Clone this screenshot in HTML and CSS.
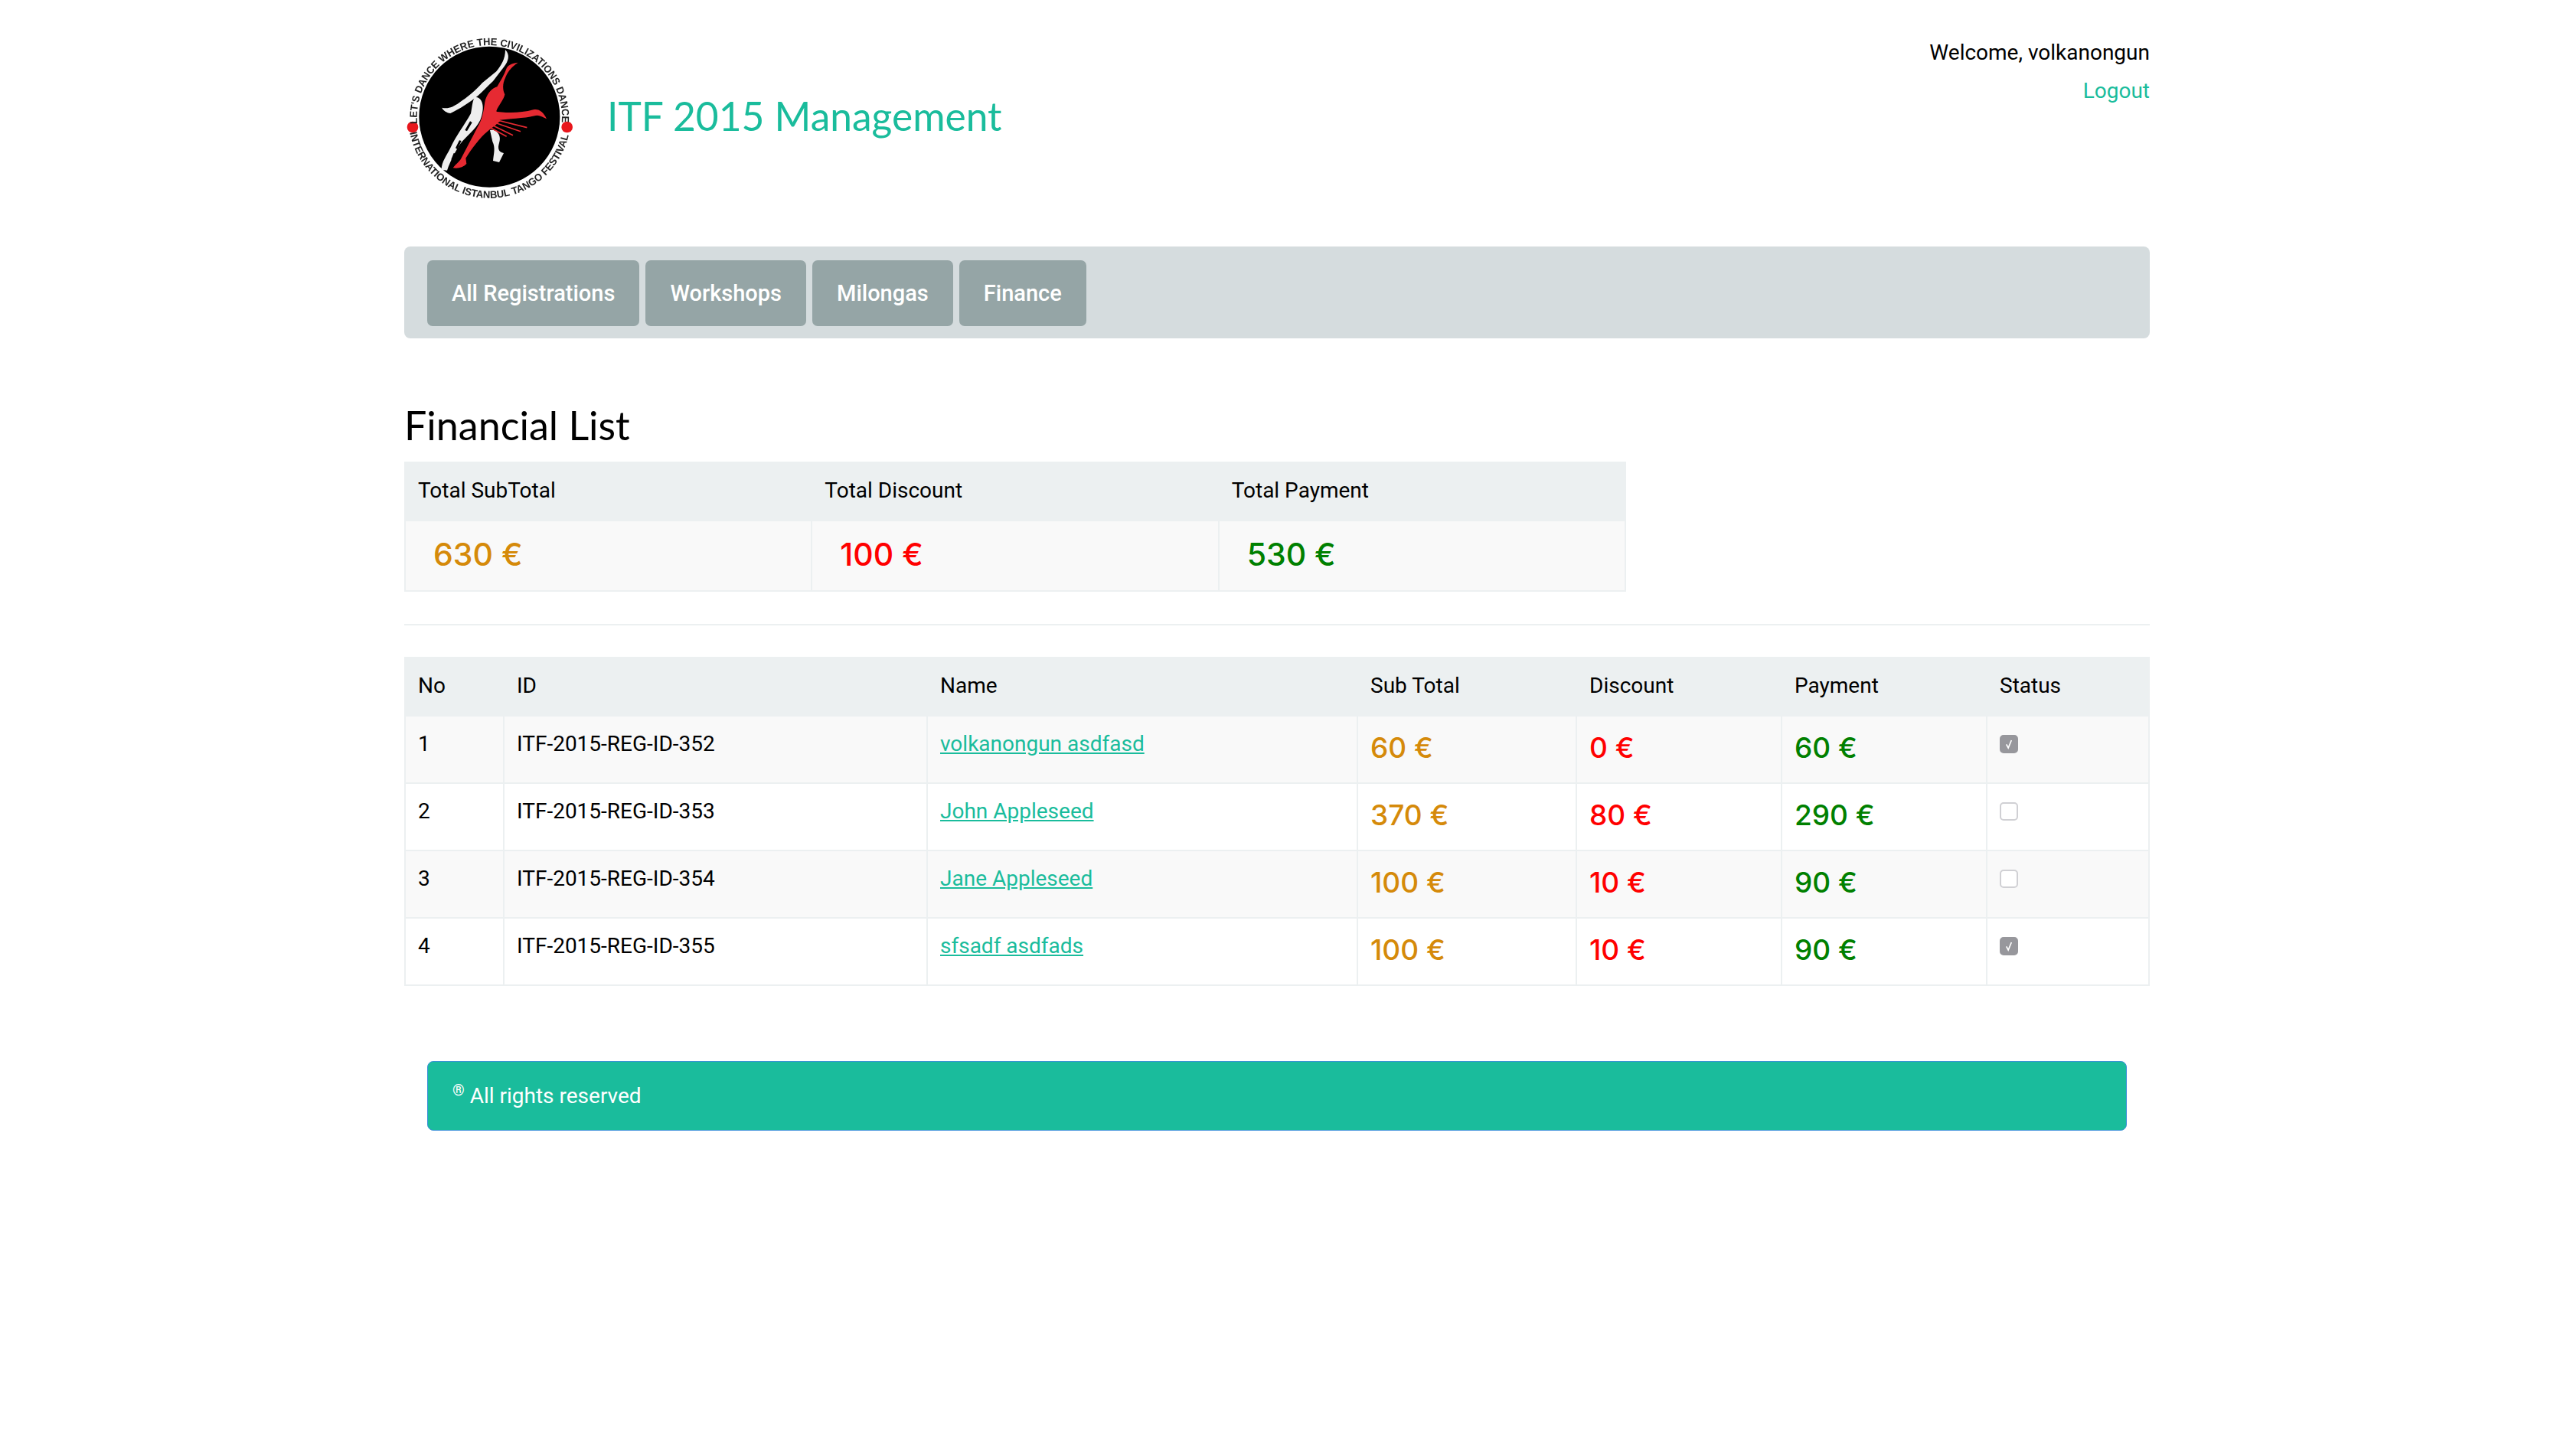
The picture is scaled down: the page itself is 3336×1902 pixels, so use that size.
FILE: index.html
```html
<!DOCTYPE html>
<html lang="en">
<head>
    <meta charset="UTF-8">
    <title>ITF 2015 Management</title>
    <link rel="stylesheet" href="styles.css">
</head>
<body>
    <div class="page">
        <header class="top">
            <svg class="logo" viewBox="30 36 660 660">
                <defs>
                    <filter id="soft"><feGaussianBlur stdDeviation="1.6"/></filter>
                    <path id="ringTop" d="M75 395 A284 284 0 1 1 641 395"/>
                    <path id="ringBottom" d="M46 430 A318 318 0 0 0 670 430"/>
                </defs>
                <g filter="url(#soft)">
                    <circle cx="358" cy="368" r="276" fill="#000"/>
                    <circle cx="57" cy="408" r="22" fill="#e8141c"/>
                    <circle cx="662" cy="408" r="22" fill="#e8141c"/>
                    <text class="ring-text"><textPath href="#ringTop" textLength="935" lengthAdjust="spacingAndGlyphs">LET'S DANCE WHERE THE CIVILIZATIONS DANCE</textPath></text>
                    <text class="ring-text"><textPath href="#ringBottom" textLength="865" lengthAdjust="spacingAndGlyphs">INTERNATIONAL ISTANBUL TANGO FESTIVAL</textPath></text>
                    <path fill="#eee" d="M420 105 C440 125 432 150 415 172 L372 228 C350 248 332 268 312 286 C280 312 240 338 205 354 C190 352 175 342 172 332 C195 338 215 330 240 312 C270 292 300 268 330 235 L385 190 C405 165 420 140 420 105 Z"/>
                    <path fill="#eee" d="M300 290 C332 290 342 330 322 380 C302 420 270 440 245 472 C225 502 205 540 192 578 L170 575 C170 545 190 520 205 490 C225 445 260 400 285 355 C290 330 290 310 300 290 Z"/>
                    <path fill="#eee" d="M360 420 C385 415 407 440 396 470 C390 490 392 505 414 510 L396 546 L372 540 C375 510 382 490 370 465 Z"/>
                    <path fill="#000" d="M240 460 L225 490 L232 495 L248 462 Z M218 510 L208 535 L214 538 L226 512 Z M282 385 L262 420 L270 424 L290 390 Z"/>
                    <path fill="#e62a32" d="M470 155 C445 158 430 165 424 180 C415 205 402 225 388 250 C366 256 346 280 340 310 C335 345 330 380 310 410 C290 450 265 495 245 535 C235 548 225 555 215 568 C235 572 255 566 268 552 L265 530 C290 490 320 450 350 425 C372 408 385 398 400 385 L385 345 C395 320 415 300 418 280 C410 262 408 240 420 215 C428 195 440 175 470 155 Z"/>
                    <path fill="#e62a32" d="M372 345 C420 354 480 354 530 340 C552 335 570 350 582 376 C565 368 550 358 535 364 C490 376 440 372 375 385 Z"/>
                    <path fill="none" stroke="#e62a32" stroke-width="5" d="M365 375 L505 410 M362 385 L480 425 M358 395 L450 440 M352 405 L425 445"/>
                </g>
            </svg>
            <h1 class="brand">ITF 2015 Management</h1>
            <div class="user-box">
                <div>Welcome, volkanongun</div>
                <a href="#">Logout</a>
            </div>
        </header>

        <nav class="menu">
            <a class="menu-btn" href="#">All Registrations</a>
            <a class="menu-btn" href="#">Workshops</a>
            <a class="menu-btn" href="#">Milongas</a>
            <a class="menu-btn" href="#">Finance</a>
        </nav>

        <h2 class="section-title">Financial List</h2>

        <table class="grid totals">
            <thead>
                <tr>
                    <th>Total SubTotal</th>
                    <th>Total Discount</th>
                    <th>Total Payment</th>
                </tr>
            </thead>
            <tbody>
                <tr>
                    <td class="big sub">630 €</td>
                    <td class="big disc">100 €</td>
                    <td class="big pay">530 €</td>
                </tr>
            </tbody>
        </table>

        <hr class="divider">

        <table class="grid list">
            <colgroup>
                <col class="c-no"><col class="c-id"><col class="c-name"><col class="c-sub"><col class="c-disc"><col class="c-pay"><col>
            </colgroup>
            <thead>
                <tr>
                    <th>No</th>
                    <th>ID</th>
                    <th>Name</th>
                    <th>Sub Total</th>
                    <th>Discount</th>
                    <th>Payment</th>
                    <th>Status</th>
                </tr>
            </thead>
            <tbody>
                <tr>
                    <td>1</td>
                    <td>ITF-2015-REG-ID-352</td>
                    <td><a href="#">volkanongun asdfasd</a></td>
                    <td class="amt sub">60 €</td>
                    <td class="amt disc">0 €</td>
                    <td class="amt pay">60 €</td>
                    <td><span class="check on"><svg viewBox="0 0 24 24"><path d="M8 12.5 L11 18 L16 6" fill="none" stroke="#fff" stroke-width="2"/></svg></span></td>
                </tr>
                <tr>
                    <td>2</td>
                    <td>ITF-2015-REG-ID-353</td>
                    <td><a href="#">John Appleseed</a></td>
                    <td class="amt sub">370 €</td>
                    <td class="amt disc">80 €</td>
                    <td class="amt pay">290 €</td>
                    <td><span class="check"></span></td>
                </tr>
                <tr>
                    <td>3</td>
                    <td>ITF-2015-REG-ID-354</td>
                    <td><a href="#">Jane Appleseed</a></td>
                    <td class="amt sub">100 €</td>
                    <td class="amt disc">10 €</td>
                    <td class="amt pay">90 €</td>
                    <td><span class="check"></span></td>
                </tr>
                <tr>
                    <td>4</td>
                    <td>ITF-2015-REG-ID-355</td>
                    <td><a href="#">sfsadf asdfads</a></td>
                    <td class="amt sub">100 €</td>
                    <td class="amt disc">10 €</td>
                    <td class="amt pay">90 €</td>
                    <td><span class="check on"><svg viewBox="0 0 24 24"><path d="M8 12.5 L11 18 L16 6" fill="none" stroke="#fff" stroke-width="2"/></svg></span></td>
                </tr>
            </tbody>
        </table>

        <footer class="foot"><sup>®</sup> All rights reserved</footer>
    </div>
</body>
</html>
```

FILE: styles.css
```css
body {
    margin: 0;
    background: #fff;
    color: #000;
    font-family: Roboto, "Liberation Sans", sans-serif;
    font-size: 28px;
    line-height: 40px;
}

a {
    color: #1abc9c;
}

.page {
    width: 2280px;
    margin: 0 auto;
}

.top {
    display: flex;
    align-items: flex-start;
    height: 322px;
}

.logo {
    width: 220px;
    height: 220px;
    margin: 42px 0 0 2px;
    flex-shrink: 0;
}

.ring-text {
    font-family: "Liberation Sans", sans-serif;
    font-size: 40px;
    font-weight: bold;
    fill: #222;
}

.brand {
    margin: 114px 0 0 43px;
    color: #1abc9c;
    font-family: Lato, sans-serif;
    font-size: 51.5px;
    font-weight: 400;
    line-height: 74px;
}

.user-box {
    margin-left: auto;
    padding-top: 44px;
    line-height: 50px;
    text-align: right;
}

.user-box a {
    display: block;
    text-decoration: none;
}

.menu {
    display: flex;
    gap: 8px;
    height: 120px;
    box-sizing: border-box;
    padding: 18px 30px 16px;
    background: #d5dcde;
    border-radius: 8px;
}

.menu-btn {
    display: flex;
    align-items: center;
    padding: 0 32px;
    background: #95a5a6;
    border-radius: 7px;
    color: #fff;
    font-size: 29px;
    font-weight: 500;
    text-decoration: none;
}

.section-title {
    margin: 82px 0 17px;
    font-family: Lato, sans-serif;
    font-size: 52px;
    font-weight: 400;
    line-height: 62px;
}

.grid {
    border-collapse: collapse;
    table-layout: fixed;
}

.grid th,
.grid td {
    border: 2px solid #ecf0f1;
    padding: 16px;
    text-align: left;
    vertical-align: top;
}

.grid th {
    background: #ecf0f1;
    font-weight: 400;
    height: 42px;
    padding-top: 16px;
    padding-bottom: 16px;
}

.grid tbody tr:nth-child(odd) td {
    background: #f9f9f9;
}

.totals {
    width: 1596px;
}

.big {
    height: 58px;
    font-family: Inter, Roboto, sans-serif;
    font-size: 41px;
    font-weight: 500;
    line-height: 58px;
    padding-top: 14px !important;
    padding-bottom: 18px !important;
    padding-left: 36px !important;
}

.amt {
    font-family: Inter, Roboto, sans-serif;
    font-size: 37px;
    font-weight: 500;
    line-height: 48px;
    padding-top: 17px !important;
    padding-bottom: 21px !important;
}

.sub {
    color: #d58a0a;
}

.disc {
    color: #f00;
}

.pay {
    color: #008000;
}

.divider {
    height: 2px;
    margin: 42px 0 41px;
    background: #ecf0f1;
    border: 0;
}

.list {
    width: 2280px;
}

.c-no {
    width: 129px;
}

.c-id {
    width: 553px;
}

.c-name {
    width: 562px;
}

.c-sub {
    width: 286px;
}

.c-disc {
    width: 268px;
}

.c-pay {
    width: 268px;
}

.check {
    display: block;
    width: 24px;
    height: 24px;
    margin-top: 8px;
    box-sizing: border-box;
    background: #fff;
    border: 2px solid #d0d0d4;
    border-radius: 5px;
}

.check.on {
    background: #97979c;
    border-color: #97979c;
}

.check svg {
    display: block;
    width: 20px;
    height: 20px;
}

.foot {
    margin: 98px 30px 0;
    height: 91px;
    box-sizing: border-box;
    padding: 25px 32px 0;
    background: #1abc9c;
    border: 1px solid #3b8fd9;
    border-radius: 8px;
    color: #fff;
}

.foot sup {
    font-size: 20px;
    line-height: 0;
}
```
